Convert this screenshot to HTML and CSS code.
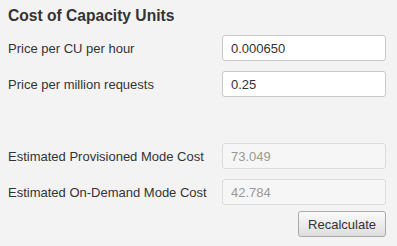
FILE: index.html
```html
<!DOCTYPE html>
<html lang="en">
<head>
    <meta charset="UTF-8">
    <meta name="viewport" content="width=device-width, initial-scale=1.0">
    <title>Cost of Capacity Units</title>
    <link rel="stylesheet" href="styles.css">
</head>
<body>
    <div class="panel">
        <h1>Cost of Capacity Units</h1>
        <div class="row">
            <label for="cu-price">Price per CU per hour</label>
            <input type="text" id="cu-price" value="0.000650">
        </div>
        <div class="row">
            <label for="req-price">Price per million requests</label>
            <input type="text" id="req-price" value="0.25">
        </div>
        <div class="row spaced">
            <label for="prov-cost">Estimated Provisioned Mode Cost</label>
            <input type="text" id="prov-cost" value="73.049" disabled>
        </div>
        <div class="row">
            <label for="ondemand-cost">Estimated On-Demand Mode Cost</label>
            <input type="text" id="ondemand-cost" value="42.784" disabled>
        </div>
        <div class="actions">
            <button type="button">Recalculate</button>
        </div>
    </div>
</body>
</html>
```

FILE: styles.css
```css
body {
    margin: 0;
    background: #f3f3f3;
    font-family: "Liberation Sans", Arial, sans-serif;
    font-size: 13px;
    color: #333;
}
.panel {
    padding: 6px 11px 0 8px;
}
h1 {
    margin: 0 0 10px 0;
    font-size: 15.6px;
    line-height: 19px;
    font-weight: bold;
    color: #333;
}
.row {
    display: grid;
    grid-template-columns: 214px 164px;
    align-items: center;
    margin-bottom: 10px;
}
.row.spaced {
    margin-top: 46px;
}
input {
    box-sizing: border-box;
    height: 26px;
    width: 164px;
    padding: 0 8px;
    border: 1px solid #c8c8c8;
    border-radius: 3px;
    background: #fff;
    font-family: "Liberation Sans", Arial, sans-serif;
    font-size: 13px;
    color: #333;
}
input:disabled {
    background: #f6f6f6;
    border-color: #dcdcdc;
    color: #999;
}
.actions {
    display: flex;
    justify-content: flex-end;
    width: 378px;
    margin-top: -4px;
}
button {
    height: 26px;
    padding: 0 9px;
    border: 1px solid #aaa;
    border-radius: 3px;
    background: linear-gradient(#fafafa, #dedede);
    font-family: "Liberation Sans", Arial, sans-serif;
    font-size: 13px;
    color: #333;
}
```
